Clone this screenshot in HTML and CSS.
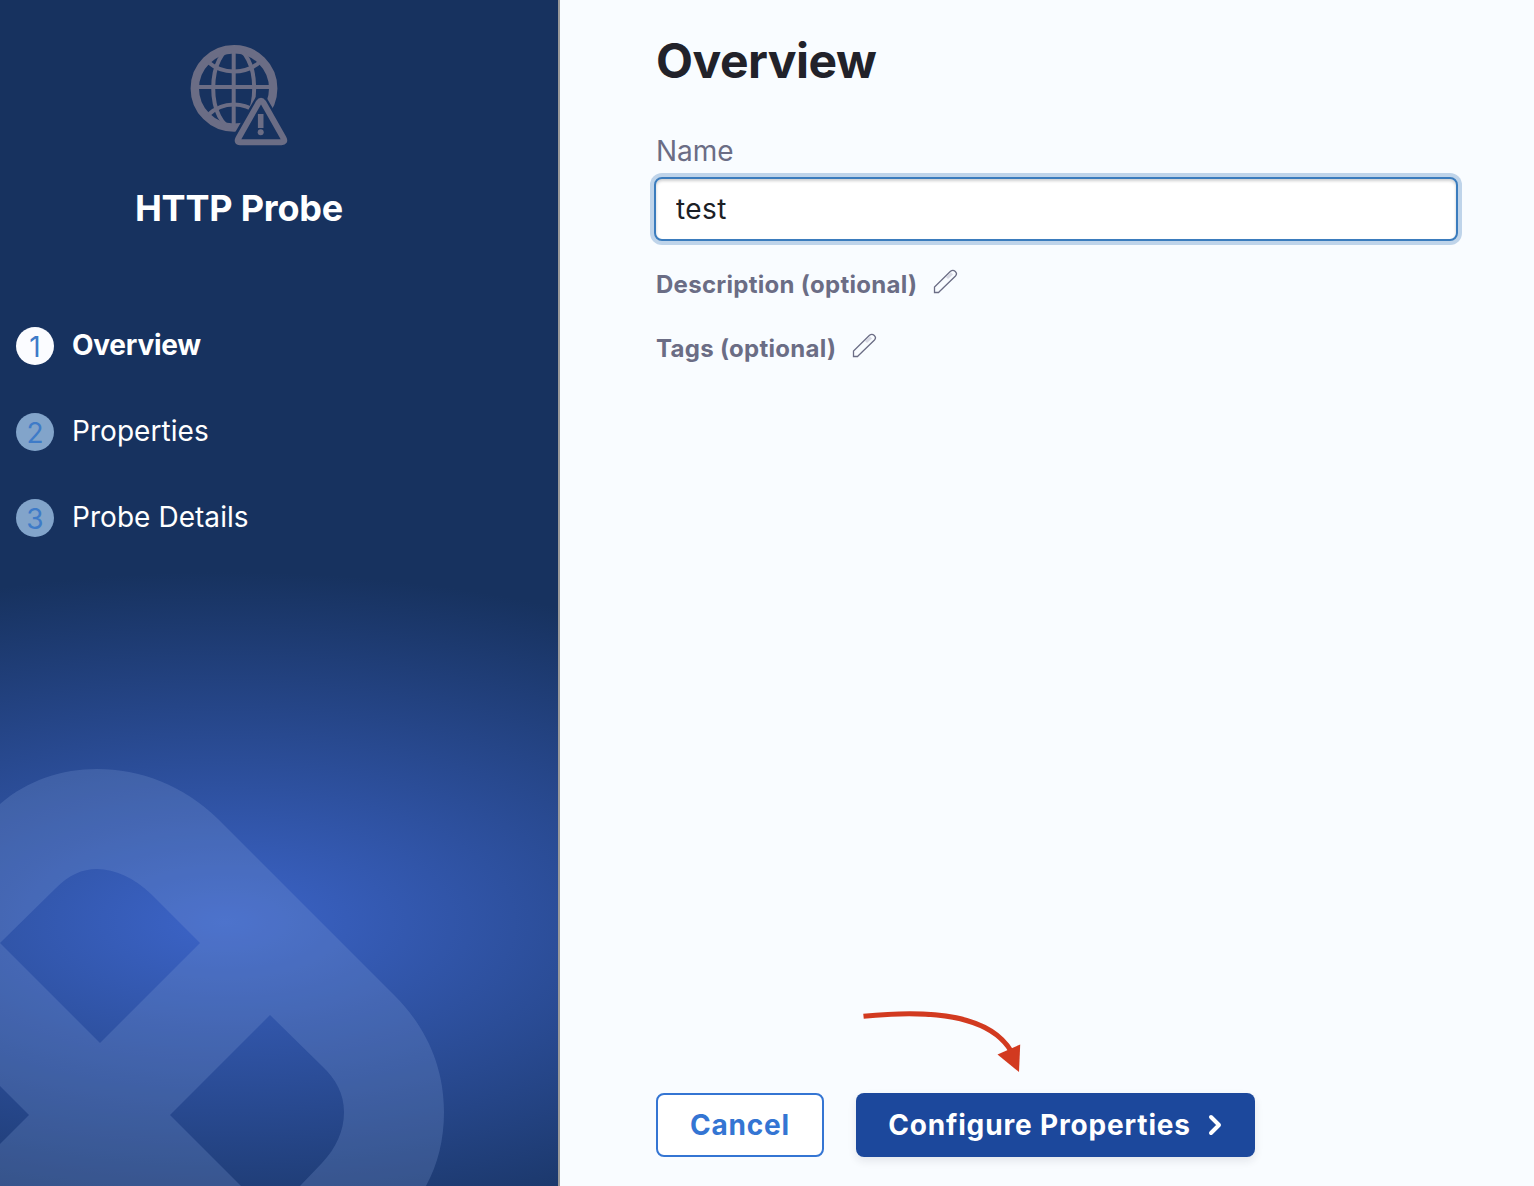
FILE: index.html
```html
<!DOCTYPE html>
<html lang="en">
<head>
<meta charset="utf-8">
<title>HTTP Probe</title>
<link rel="stylesheet" href="styles.css">
</head>
<body>
<div class="wizard">
  <aside class="sidebar">
    <svg class="backdrop" viewBox="0 0 558 1186" aria-hidden="true">
      <path fill-rule="evenodd" d="M0 804C28 780 62 769 97 769C140 769 183 785 218 819L395 996C427 1028 444 1068 444 1112C444 1139 438 1164 426 1186H300L322 1163C336 1148 344 1131 344 1112C344 1094 336 1079 322 1066L270 1015L170 1115L241 1186H0V1144L29 1115L0 1086ZM0 943L56 888C69 875 82 869 97 869C115 869 134 878 151 894L200 943L100 1043Z"/>
    </svg>
    <header class="probe">
      <svg class="probe-icon" width="98" height="102" viewBox="0 0 98 102" fill="none" stroke="#6b6d85" aria-hidden="true">
        <defs>
          <mask id="cut" maskUnits="userSpaceOnUse" x="0" y="0" width="98" height="102">
            <rect width="98" height="102" fill="#fff" stroke="none"/>
            <path d="M71 57L95 98H47Z" fill="#000" stroke="#000" stroke-width="13" stroke-linejoin="round"/>
          </mask>
        </defs>
        <g mask="url(#cut)">
          <circle cx="44" cy="44.400" r="39.200" stroke-width="8.400"/>
          <g stroke-width="4">
            <path d="M43.700 4V84M5 43H83"/>
            <ellipse cx="43.700" cy="44" rx="20.500" ry="40"/>
            <path d="M18 18Q29 27.500 44 27.500T70 18M18 71Q29 60.500 44 60.500T70 71"/>
          </g>
        </g>
        <path d="M68.800 58.300L48.300 94.500Q46.500 98.200 50 98.200H91.500Q95.500 98.200 93.700 94.500L73.200 58.300Q71 55 68.800 58.300Z" stroke-width="6" stroke-linejoin="round"/>
        <path d="M70.700 70V84" stroke-width="5.600"/>
        <circle cx="70.700" cy="88.200" r="3" fill="#6b6d85" stroke="none"/>
      </svg>
      <h2 class="probe-title">HTTP Probe</h2>
    </header>
    <ol class="steps">
      <li class="step step-active"><span class="step-number">1</span><span class="step-label">Overview</span></li>
      <li class="step"><span class="step-number">2</span><span class="step-label">Properties</span></li>
      <li class="step"><span class="step-number">3</span><span class="step-label">Probe Details</span></li>
    </ol>
  </aside>
  <main class="content">
    <h1 class="title">Overview</h1>
    <label class="label" for="name">Name</label>
    <input class="input" id="name" type="text" value="test">
    <div class="optional">
      <span class="optional-label">Description (optional)</span>
      <svg class="pencil" width="26" height="26" viewBox="0 0 26 26"><path class="pencil-shade" d="M14 9L19 4.500"/><path d="M1.500 23.500V18L17.500 2.300Q20 .3 22.300 2.500T22.500 7L7 22L5.500 23.500Z"/></svg>
    </div>
    <div class="optional">
      <span class="optional-label">Tags (optional)</span>
      <svg class="pencil" width="26" height="26" viewBox="0 0 26 26"><path class="pencil-shade" d="M14 9L19 4.500"/><path d="M1.500 23.500V18L17.500 2.300Q20 .3 22.300 2.500T22.500 7L7 22L5.500 23.500Z"/></svg>
    </div>
    <footer class="actions">
      <button class="button button-secondary" type="button">Cancel</button>
      <button class="button button-primary" type="button">Configure Properties
        <svg class="chevron" width="14" height="22" viewBox="0 0 14 22"><path d="M3 3L11 11L3 19"/></svg>
      </button>
      <svg class="pointer" width="162" height="66" viewBox="0 0 162 66" aria-hidden="true"><path class="pointer-line" d="M3.500 8.300C75 1 130 8 151 43"/><path class="pointer-head" d="M137.500 46.500L160.200 36.500L159 64Z"/></svg>
    </footer>
  </main>
</div>
</body>
</html>
```
FILE: styles.css
```css
* {
  box-sizing: border-box;
}

body {
  margin: 0;
  font-family: Inter, "Liberation Sans", sans-serif;
  -webkit-font-smoothing: antialiased;
}

.wizard {
  display: flex;
  height: 1186px;
  overflow: hidden;
  background: #f9fcff;
}

.sidebar {
  position: relative;
  flex: none;
  width: 560px;
  border-right: 2px solid #999;
  color: #fff;
  background: radial-gradient(ellipse 760px 350px at 225px 922px, #3c64c8, #17325f);
}

.backdrop {
  position: absolute;
  inset: 0;
  width: 558px;
  height: 1186px;
  fill: rgba(133, 162, 217, .24);
}

.probe {
  position: relative;
  display: flex;
  flex-direction: column;
  align-items: center;
  width: 478px;
  padding-top: 44px;
}

.probe-icon {
  display: block;
}

.probe-title {
  margin: 40px 0 0;
  font-size: 36px;
  line-height: 44px;
  font-weight: 700;
  letter-spacing: -.2px;
}

.steps {
  position: relative;
  display: flex;
  flex-direction: column;
  gap: 48px;
  margin: 97px 0 0;
  padding: 0 0 0 16px;
  list-style: none;
}

.step {
  display: flex;
  align-items: center;
  gap: 18px;
  height: 38px;
  font-size: 28px;
  line-height: 38px;
}

.step-number {
  width: 38px;
  height: 38px;
  padding-top: 1px;
  border-radius: 50%;
  text-align: center;
  color: #3e7bc8;
  background: #82a4ca;
}

.step-label {
  margin-top: -2px;
  letter-spacing: .05px;
}

.step-active .step-number {
  background: #fbfcff;
}

.step-active .step-label {
  font-weight: 700;
  letter-spacing: -.25px;
}

.content {
  display: flex;
  flex: 1;
  flex-direction: column;
  align-items: flex-start;
  padding: 32px 76px 29px 96px;
}

.title {
  margin: 0;
  color: #22222a;
  font-size: 48px;
  line-height: 58px;
  font-weight: 700;
  letter-spacing: -.5px;
}

.label {
  margin-top: 44px;
  color: #6b6d85;
  font-size: 28px;
  line-height: 34px;
}

.input {
  width: 804px;
  height: 64px;
  margin: 9px 0 30px -2px;
  padding: 0 20px;
  border: 2px solid #3b7cbd;
  border-radius: 8px;
  outline: none;
  color: #1c2026;
  background: #fff;
  box-shadow: 0 0 0 4px #bfd4ea, inset 0 2px 3px rgba(16, 22, 26, .2);
  font: 400 28px Inter, "Liberation Sans", sans-serif;
  letter-spacing: .4px;
}

.optional {
  display: flex;
  align-items: center;
  gap: 16px;
  height: 28px;
  margin-bottom: 36px;
}

.optional-label {
  color: #6b6d85;
  font-size: 24px;
  line-height: 28px;
  font-weight: 700;
  letter-spacing: .28px;
}

.pencil {
  margin-top: -6px;
  fill: none;
  stroke: #6b6d85;
  stroke-width: 1.3;
}

.pencil-shade {
  stroke: #d9dae5;
  stroke-width: 3;
}

.actions {
  position: relative;
  display: flex;
  gap: 32px;
  margin-top: auto;
}

.button {
  display: flex;
  align-items: center;
  justify-content: center;
  height: 64px;
  padding: 0;
  border-radius: 8px;
  font: 700 28px Inter, "Liberation Sans", sans-serif;
  letter-spacing: .8px;
}

.button-secondary {
  width: 168px;
  border: 2px solid #3475d3;
  color: #3475d3;
  background: #fff;
}

.button-primary {
  gap: 17px;
  width: 399px;
  padding-right: 1px;
  border: 0;
  color: #fff;
  background: #1c489c;
  box-shadow: 0 4px 8px rgba(40, 41, 61, .1);
  letter-spacing: .84px;
}

.chevron {
  fill: none;
  stroke: #fff;
  stroke-width: 4;
  stroke-linecap: round;
  stroke-linejoin: round;
}

.pointer {
  position: absolute;
  left: 204px;
  top: -85px;
}

.pointer-line {
  fill: none;
  stroke: #d23a20;
  stroke-width: 5;
}

.pointer-head {
  fill: #d23a20;
}
```
